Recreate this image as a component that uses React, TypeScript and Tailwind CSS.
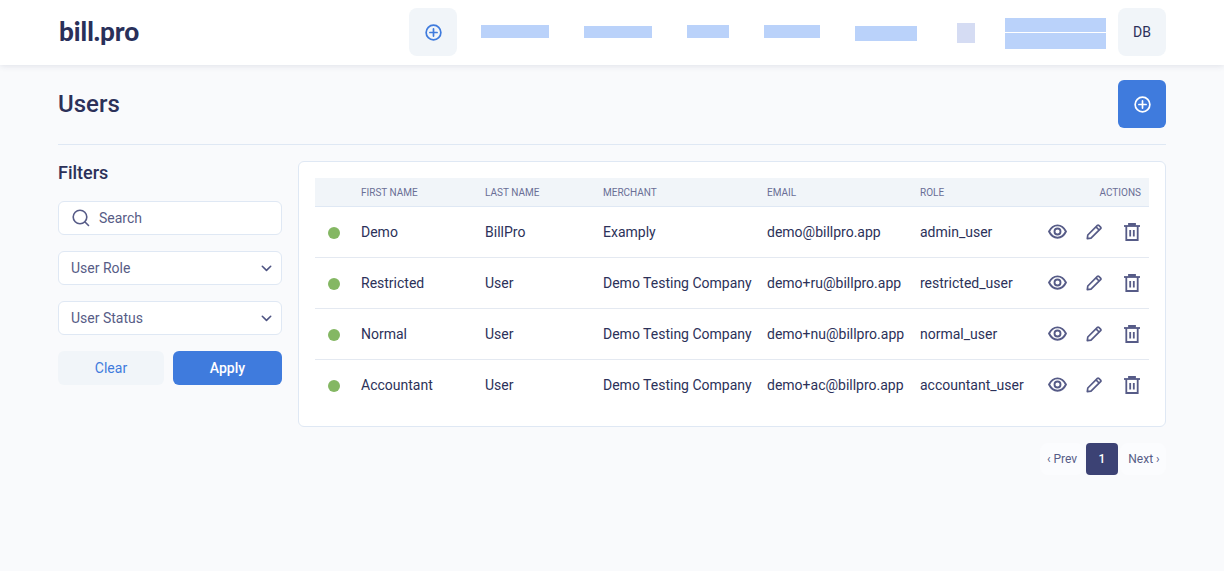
import React from "react";

const Plus = ({ cls }: { cls: string }) => (
  <svg viewBox="0 0 18 18" className={cls} fill="none" stroke="currentColor" strokeWidth="1.8" strokeLinecap="round">
    <circle cx="9" cy="9" r="7.800" />
    <path d="M9 5.200v7.600M5.200 9h7.600" />
  </svg>
);

const Chevron = () => (
  <svg viewBox="0 0 12 8" className="w-[11px] h-[7px] text-[#4d5382]" fill="none" stroke="currentColor" strokeWidth="1.8" strokeLinecap="round" strokeLinejoin="round">
    <path d="M1.200 1.400 6 6.200l4.800-4.800" />
  </svg>
);

const Eye = () => (
  <svg viewBox="0 0 20 16" className="w-[19px] h-[15px] text-[#565b87]" fill="none" stroke="currentColor" strokeWidth="2">
    <path d="M1 8c2-4.200 5.200-6.600 9-6.600S17 3.800 19 8c-2 4.200-5.200 6.600-9 6.600S3 12.200 1 8Z" />
    <circle cx="10" cy="8" r="3.200" />
  </svg>
);

const Pencil = () => (
  <svg viewBox="0 0 16 16" className="w-[16px] h-[16px] text-[#565b87]" fill="none" stroke="currentColor" strokeWidth="1.7" strokeLinejoin="round">
    <path d="M1.300 14.700 1.800 11 11.400 1.400a1 1 0 0 1 1.400 0l1.800 1.800a1 1 0 0 1 0 1.400L5 14.200l-3.700.5Z" />
    <path d="m10 2.900 3.100 3.100" />
  </svg>
);

const Trash = () => (
  <svg viewBox="0 0 16 18" className="w-[16px] h-[18px] text-[#565b87]" fill="none" stroke="currentColor" strokeWidth="1.8">
    <path d="M0 3h16" />
    <path d="M5 2.800V1h6v1.800" fill="currentColor" />
    <path d="M2.300 3v14h11.400V3" />
    <path d="M6.200 7v6.500M9.800 7v6.500" />
  </svg>
);

const rows = [
  ["Demo", "BillPro", "Examply", "demo@billpro.app", "admin_user"],
  ["Restricted", "User", "Demo Testing Company", "demo+ru@billpro.app", "restricted_user"],
  ["Normal", "User", "Demo Testing Company", "demo+nu@billpro.app", "normal_user"],
  ["Accountant", "User", "Demo Testing Company", "demo+ac@billpro.app", "accountant_user"],
];

const Select = ({ label }: { label: string }) => (
  <div className="h-[34px] bg-white border border-[#dfe8f4] rounded-[6px] flex items-center justify-between pl-[12px] pr-[9px] text-[14px] text-[#575c86]">
    <span>{label}</span>
    <Chevron />
  </div>
);

export default function App() {
  return (
    <div className="min-h-[571px] bg-[#f9fafc] text-[#2c3159] font-['Roboto',sans-serif]">
      <header className="h-[65px] bg-white shadow-[0_1px_6px_rgba(40,50,90,0.12)] px-[58px] flex items-center">
        <div className="w-[81px] shrink-0 pl-[1px] font-['Lato',sans-serif] font-black text-[26px] leading-none text-[#29305a] -mt-[3px] whitespace-nowrap">bill.pro</div>
        <button className="ml-[270px] w-[48px] h-[48px] rounded-[8px] bg-[#f1f5f9] flex items-center justify-center text-[#3f7bdd] -mt-[1px]">
          <Plus cls="w-[17px] h-[17px]" />
        </button>
        <div className="ml-[24px] w-[68px] h-[13px] bg-[#bad2fa] -mt-[2px]" />
        <div className="ml-[35px] w-[68px] h-[12px] bg-[#bad2fa] -mt-[1px]" />
        <div className="ml-[35px] w-[42px] h-[13px] bg-[#bad2fa] -mt-[2px]" />
        <div className="ml-[35px] w-[56px] h-[13px] bg-[#bad2fa] -mt-[2px]" />
        <div className="ml-[35px] w-[62px] h-[15px] bg-[#bad2fa] mt-[2px]" />
        <div className="ml-[40px] w-[18px] h-[20px] bg-[#d5dcf3] mt-[1px]" />
        <div className="ml-[30px] w-[101px] flex flex-col gap-[1px] mt-[2px]">
          <div className="h-[14px] bg-[#bad2fa]" />
          <div className="h-[16px] bg-[#bad2fa]" />
        </div>
        <div className="ml-[12px] w-[48px] h-[48px] rounded-[8px] bg-[#f1f5f9] flex items-center justify-center text-[14px] text-[#2c3159] -mt-[1px]">DB</div>
      </header>

      <main className="px-[58px]">
        <div className="h-[80px] pt-[15px] border-b border-[#dfe8f4] flex items-start justify-between">
          <h1 className="text-[24px] leading-[48px] font-medium text-[#2c3159]">Users</h1>
          <button className="w-[48px] h-[48px] rounded-[6px] bg-[#3f7bdd] flex items-center justify-center text-white">
            <Plus cls="w-[17px] h-[17px]" />
          </button>
        </div>

        <div className="flex mt-[16px] gap-[16px]">
          <aside className="w-[224px] shrink-0">
            <h2 className="text-[18px] leading-[22px] font-medium mt-[1px] text-[#2c3159]">Filters</h2>
            <div className="mt-[17px] h-[34px] bg-white border border-[#dfe8f4] rounded-[6px] flex items-center pl-[13px] text-[14px] text-[#575c86]">
              <svg viewBox="0 0 18 18" className="w-[18px] h-[18px] text-[#565b87]" fill="none" stroke="currentColor" strokeWidth="1.6" strokeLinecap="round">
                <circle cx="8" cy="8" r="6.800" />
                <path d="m13 13 3.500 3.500" />
              </svg>
              <span className="ml-[9px]">Search</span>
            </div>
            <div className="mt-[16px]"><Select label="User Role" /></div>
            <div className="mt-[16px]"><Select label="User Status" /></div>
            <div className="mt-[16px] flex gap-[9px]">
              <button className="w-[106px] h-[34px] rounded-[6px] bg-[#f1f5f9] text-[14px] text-[#3f7bdd]">Clear</button>
              <button className="w-[109px] h-[34px] rounded-[6px] bg-[#3f7bdd] text-[14px] font-medium text-white">Apply</button>
            </div>
          </aside>

          <div className="flex-1 min-w-0">
            <section className="h-[266px] bg-white border border-[#dfe8f4] rounded-[6px] pt-[16px] px-[16px]">
              <table className="w-full table-fixed border-collapse">
                <colgroup>
                  <col className="w-[46px]" />
                  <col className="w-[124px]" />
                  <col className="w-[118px]" />
                  <col className="w-[164px]" />
                  <col className="w-[153px]" />
                  <col className="w-[117px]" />
                  <col />
                </colgroup>
                <thead>
                  <tr className="h-[28px] bg-[#f1f5f9] border-b border-[#dfe8f4] text-[10px] font-normal text-[#6a6f96] text-left">
                    <th />
                    <th className="font-normal pt-[1px]">FIRST NAME</th>
                    <th className="font-normal pt-[1px]">LAST NAME</th>
                    <th className="font-normal pt-[1px]">MERCHANT</th>
                    <th className="font-normal pt-[1px]">EMAIL</th>
                    <th className="font-normal pt-[1px]">ROLE</th>
                    <th className="font-normal pt-[1px] text-right pr-[8px]">ACTIONS</th>
                  </tr>
                </thead>
                <tbody>
                  {rows.map((r, i) => (
                    <tr key={r[0]} className={`h-[51px] text-[14px] text-[#2c3159] ${i < 3 ? "border-b border-[#e4e9f1]" : ""}`}>
                      <td className="pl-[13px] pt-[3px]"><div className="w-[12px] h-[12px] rounded-full bg-[#84b763]" /></td>
                      {r.map((c) => (
                        <td key={c} className="whitespace-nowrap pt-[2px]">{c}</td>
                      ))}
                      <td>
                        <div className="flex items-center justify-end pr-[9px]">
                          <Eye />
                          <span className="ml-[19px]"><Pencil /></span>
                          <span className="ml-[22px]"><Trash /></span>
                        </div>
                      </td>
                    </tr>
                  ))}
                </tbody>
              </table>
            </section>
            <nav className="mt-[16px] flex justify-end items-center text-[12px] text-[#575c86] gap-[2px]">
              <span className="w-[44px] h-[32px] rounded-[8px] bg-[#fbfcfe] flex items-center justify-center">‹ Prev</span>
              <span className="w-[32px] h-[32px] rounded-[4px] bg-[#3c4274] text-white flex items-center justify-center font-medium">1</span>
              <span className="w-[46px] h-[32px] rounded-[8px] bg-[#fbfcfe] flex items-center justify-center pl-[2px]">Next ›</span>
            </nav>
          </div>
        </div>
      </main>
    </div>
  );
}
